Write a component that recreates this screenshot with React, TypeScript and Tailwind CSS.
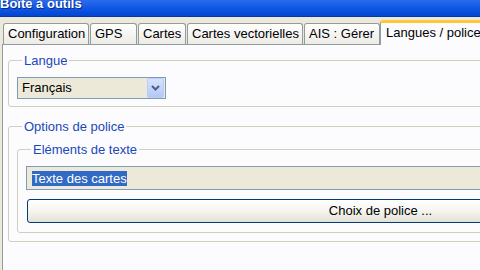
import React from 'react';

const tabs = [
  { label: 'Configuration', w: 'w-[86px]' },
  { label: 'GPS', w: 'w-[47px]' },
  { label: 'Cartes', w: 'w-[48px]' },
  { label: 'Cartes vectorielles', w: 'w-[116px]' },
  { label: 'AIS : Gérer', w: 'w-[76px]' },
];

const Tab: React.FC<{ label: string; w: string }> = ({ label, w }) => (
  <div
    className={`${w} h-[21px] flex items-center pl-[4px] whitespace-nowrap border border-b-0 border-[#919b9c] rounded-t-[3px] bg-gradient-to-b from-[#ffffff] to-[#ecebe6] text-black`}
  >
    {label}
  </div>
);

const GroupBox: React.FC<{ title: string; className?: string; children: React.ReactNode }> = ({ title, className = '', children }) => (
  <fieldset className={`border border-[#d0d0bf] rounded-[3px] ${className}`}>
    <legend className="ml-[5px] px-[2px] leading-[15px] text-[#1a48b8]">{title}</legend>
    {children}
  </fieldset>
);

const Chevron = () => (
  <svg width="9" height="6" viewBox="0 0 9 6">
    <path d="M1 1 L4.5 4.5 L8 1" fill="none" stroke="#4d6185" strokeWidth="2" />
  </svg>
);

export default function App() {
  return (
    <div className="w-[480px] h-[270px] overflow-hidden bg-[#ece9d8]">
      <div className="w-[762px] font-['Liberation_Sans',Arial,sans-serif] text-[13px] text-black">
        {/* barre de titre */}
        <div className="h-[17px] flex items-start bg-gradient-to-b from-[#2a6bec] via-[#0f58e4] to-[#0445cf] border-b border-[#0036b8]">
          <span className="-mt-[4px] leading-[15px] font-bold text-white [text-shadow:1px_1px_0_#0a2a8a]">Boîte à outils</span>
        </div>

        {/* onglets */}
        <div className="h-[27px] flex items-end gap-[1px] pl-[3px]">
          {tabs.map(t => (
            <Tab key={t.label} label={t.label} w={t.w} />
          ))}
          <div className="relative z-10 -ml-px mb-[-1px] h-[25px] w-[110px] flex items-center pl-[5px] pb-[3px] whitespace-nowrap bg-[#fcfcfe] border-x border-[#919b9c] border-t-[3px] border-t-[#ffc83c] rounded-t-[3px]">
            Langues / police
          </div>
        </div>

        {/* panneau */}
        <div className="ml-[2px] w-[757px] h-[240px] bg-[#fcfcfe] border border-[#919b9c] px-[5px] pt-[8px]">
          <GroupBox title="Langue" className="pl-[8px] pt-[9px] pb-[7px]">
            <div className="w-[149px] h-[22px] flex items-center border border-[#7f9db9] bg-[#ece9d8] pl-[4px] pr-px">
              <span className="flex-1">Français</span>
              <div className="w-[17px] h-[20px] flex items-center justify-center rounded-[2px] border border-[#b9cdf8] bg-gradient-to-b from-[#d6e2fd] to-[#b4c8f6]">
                <Chevron />
              </div>
            </div>
          </GroupBox>

          <GroupBox title="Options de police" className="mt-[12px] px-[8px] pt-[8px] pb-[8px]">
            <GroupBox title="Eléments de texte" className="px-[8px] pt-[9px] pb-[9px]">
              <div className="flex flex-col">
                <div className="h-[24px] flex items-center border border-[#7f9db9] bg-[#ece9d8] pl-[5px]">
                  <span className="leading-[15px] bg-[#316ac5] text-white">Texte des cartes</span>
                </div>
                <button className="mx-px mt-[9px] h-[24px] border border-[#003c74] rounded-[3px] bg-gradient-to-b from-[#ffffff] via-[#f6f5f0] to-[#e3e0d6] text-black">
                  Choix de police ...
                </button>
              </div>
            </GroupBox>
          </GroupBox>
        </div>
      </div>
    </div>
  );
}
